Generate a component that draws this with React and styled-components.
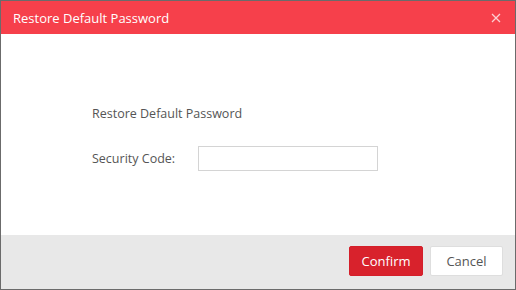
import React from 'react'
import styled, { createGlobalStyle } from 'styled-components'

const GlobalStyle = createGlobalStyle`
  html, body {
    margin: 0;
    padding: 0;
    background: #ffffff;
  }
  * { box-sizing: border-box; }
`

const Dialog = styled.div`
  width: 516px;
  height: 290px;
  display: flex;
  flex-direction: column;
  border: 1px solid #6b6b6b;
  background: #fff;
  font-family: "Segoe UI", "Open Sans", "Liberation Sans", sans-serif;
`

const Header = styled.div`
  height: 33px;
  flex: none;
  display: flex;
  align-items: center;
  justify-content: space-between;
  padding: 0 12px 0 12px;
  background: #f6404b;
  color: #fff;
  font-size: 13px;
`

const Close = styled.button`
  border: none;
  background: none;
  padding: 0;
  width: 14px;
  height: 14px;
  display: flex;
  align-items: center;
  justify-content: center;
  cursor: pointer;
  opacity: 0.75;
`

const Body = styled.div`
  flex: 1;
  padding: 67px 0 0 91px;
  display: flex;
  flex-direction: column;
  gap: 20px;
  color: #555;
  font-size: 12.5px;
`

const Row = styled.div`
  display: flex;
  align-items: center;
  height: 25px;
`

const Label = styled.span`
  width: 106px;
`

const Input = styled.input`
  width: 180px;
  height: 25px;
  border: 1px solid #d4d4d4;
  outline: none;
  padding: 0 6px;
`

const Footer = styled.div`
  height: 54px;
  flex: none;
  background: #e8e8e8;
  display: flex;
  align-items: center;
  justify-content: flex-end;
  gap: 7px;
  padding: 0 12px 2px 0;
`

const Button = styled.button`
  width: ${({ $w }) => $w}px;
  height: 30px;
  border-radius: 2px;
  font-family: inherit;
  font-size: 13px;
  cursor: pointer;
  border: 1px solid ${({ $primary }) => ($primary ? '#d41f2a' : '#dedede')};
  background: ${({ $primary }) => ($primary ? '#d8222c' : '#ffffff')};
  color: ${({ $primary }) => ($primary ? '#ffffff' : '#555555')};
`

const App = () => {
  return (
    <>
      <GlobalStyle />
      <Dialog>
        <Header>
          <span>Restore Default Password</span>
          <Close aria-label="close">
            <svg width="10" height="10" viewBox="0 0 10 10">
              <path d="M1 1L9 9M9 1L1 9" stroke="#fff" strokeWidth="1.3" />
            </svg>
          </Close>
        </Header>
        <Body>
          <Row>Restore Default Password</Row>
          <Row>
            <Label>Security Code:</Label>
            <Input type="text" />
          </Row>
        </Body>
        <Footer>
          <Button $primary $w={74}>Confirm</Button>
          <Button $w={73}>Cancel</Button>
        </Footer>
      </Dialog>
    </>
  )
}

export default App
